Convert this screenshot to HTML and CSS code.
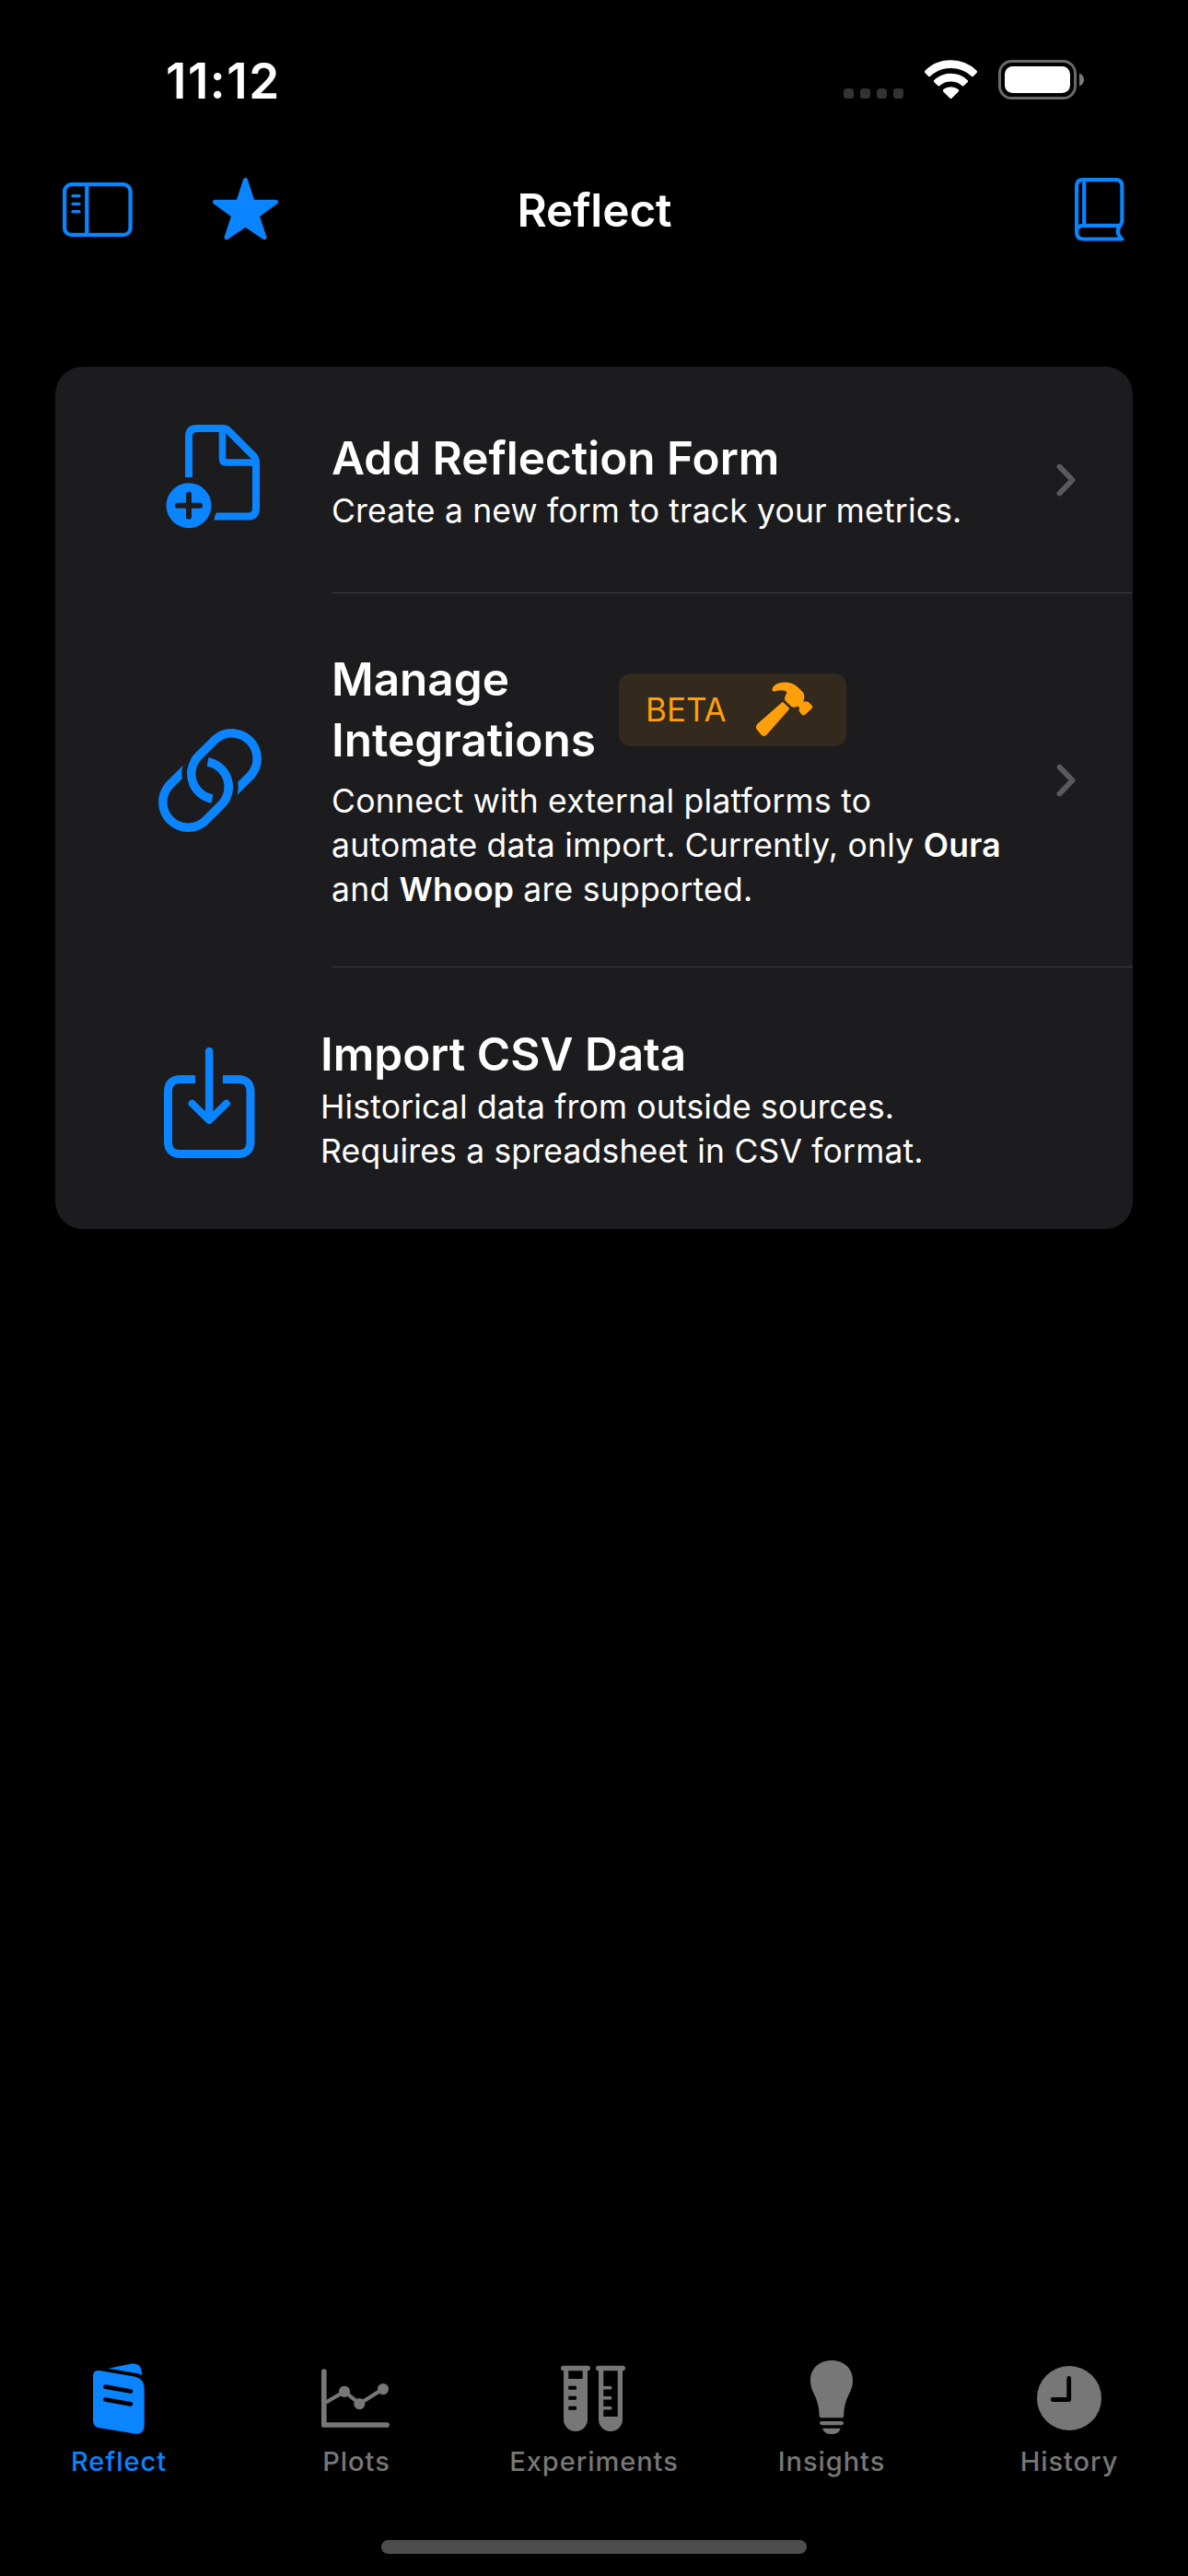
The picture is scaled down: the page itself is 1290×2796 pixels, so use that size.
FILE: index.html
```html
<!DOCTYPE html>
<html lang="en">
<head>
<meta charset="utf-8">
<title>Reflect</title>
<link rel="stylesheet" href="styles.css">
</head>
<body>
<div class="screen">
  <header class="status">
    <span class="time">11:12</span>
    <svg class="status-icons" viewBox="914 62 266 48" width="266" height="48">
      <g fill="#333"><rect x="916" y="96" width="11" height="11" rx="3.5"/><rect x="934" y="96" width="11" height="11" rx="3.5"/><rect x="952" y="96" width="11" height="11" rx="3.5"/><rect x="970" y="96" width="11" height="11" rx="3.5"/></g>
      <g fill="#fff">
        <path d="M1004.6 76.6Q1016 65.2 1032.5 65.2T1060.4 76.6Q1061.6 78 1060.4 79.2L1057 82.8Q1055.900 83.700 1054.800 82.700Q1045.600 74 1032.500 74T1010.200 82.700Q1009.100 83.700 1008 82.800L1004.600 79.200Q1003.400 78 1004.600 76.600Z"/>
        <path d="M1014.400 87Q1022 79.800 1032.500 79.800T1050.600 87Q1051.700 88.200 1050.600 89.300L1046.600 93.100Q1045.600 94 1044.500 93Q1039.500 88.600 1032.500 88.600T1020.500 93Q1019.400 94 1018.400 93.100L1014.400 89.300Q1013.300 88.200 1014.400 87Z"/>
        <path d="M1024.400 97Q1027.800 94.200 1032.500 94.200T1040.600 97Q1041.900 98.200 1040.700 99.400L1033.600 106.500Q1032.500 107.500 1031.400 106.500L1024.300 99.400Q1023.100 98.200 1024.400 97Z"/>
        <rect x="1091" y="72" width="71" height="29" rx="8.500"/>
      </g>
      <rect x="1085.500" y="66.500" width="82" height="40" rx="13" fill="none" stroke="#6a6a6a" stroke-width="3"/>
      <path d="M1172 79.500Q1177 81.500 1177 86.500T1172 93.500Z" fill="#7a7a7a"/>
    </svg>
  </header>

  <nav class="navbar">
    <div class="nav-left">
      <svg viewBox="68 190 76 74" width="76" height="74" fill="none" stroke="#0a84ff" stroke-width="4.300">
        <rect x="70.100" y="200.200" width="71.500" height="54.700" rx="7.500"/><path d="M94.300 200V255"/>
        <path d="M79 212.700H86M79 221.300H86M79 229.700H86" stroke-width="3.300" stroke-linecap="round"/>
      </svg>
      <svg viewBox="229 190 75 74" width="75" height="74" fill="#0a84ff" stroke="#0a84ff" stroke-width="5" stroke-linejoin="round">
        <path d="M266.500 195.500L274.200 219.200H299.500L279.200 234.100L287 257.700L266.500 243.600L246 257.700L253.800 234.100L233.500 219.200H258.800Z"/>
      </svg>
    </div>
    <h1>Reflect</h1>
    <svg class="nav-right" viewBox="1165 191 58 73" width="58" height="73" fill="none" stroke="#0a84ff" stroke-width="4.200" stroke-linejoin="round">
      <path d="M1169.100 252V202Q1169.100 195.100 1176 195.100H1211.500Q1218.400 195.100 1218.400 202V240L1217.300 243.300Q1210 251.500 1218.300 259.500H1176.500Q1169.100 259.500 1169.100 252Q1169.100 244.800 1176.500 244.800H1216"/>
      <path d="M1177.200 196V244.500"/>
    </svg>
  </nav>

  <main class="card">
    <section class="row row-form">
      <svg class="row-icon" viewBox="170 456 118 122" width="118" height="122" fill="none" stroke="#0a84ff" stroke-width="8">
        <path d="M205 518V474Q205 465 214 465H241Q245.500 465 248.500 468L275 494.500Q278 497.500 278 502V551.500Q278 560.600 269 560.600H232.500"/>
        <path d="M241.500 467V498Q241.500 502 245.500 502H277" stroke-width="7.500"/>
        <path d="M226 566L231.500 566L235.500 554L226 554Z" fill="#1c1c1e" stroke="none"/>
        <circle cx="205" cy="548.700" r="24.500" fill="#0a84ff" stroke="none"/>
        <path d="M193 548.700H217M205 536.700V560.700" stroke="#1c1c1e" stroke-width="6" stroke-linecap="round"/>
      </svg>
      <div class="copy">
        <h2>Add Reflection Form</h2>
        <p>Create a new form to track your metrics.</p>
      </div>
      <svg class="chevron" viewBox="0 0 24 38" width="24" height="38"><path d="M4.500 4.500L18.500 19L4.500 33.500"/></svg>
    </section>

    <section class="row row-manage">
      <svg class="row-icon" viewBox="170 788 118 118" width="118" height="118" fill="none" stroke="#0a84ff" stroke-width="9.500">
        <g id="half"><path d="M254.400 859.400L272.400 841.400A27.500 27.500 0 0 0 233.600 802.600L215.600 820.600A27.500 27.500 0 0 0 230.500 867"/><path d="M253.700 842.100A34.750 34.750 0 0 1 251.100 871.400" stroke="#1c1c1e" stroke-width="5.500"/></g>
        <use href="#half" transform="rotate(180 228 847)"/>
      </svg>
      <div class="copy">
        <div class="heading">
          <h2>Manage<br>Integrations</h2>
          <span class="badge"><span>BETA</span>
            <svg viewBox="820 740 66 62" width="66" height="62" fill="#ff9f0a">
              <path d="M849.400 764Q850.600 762.200 852 763.800L857.300 768.800Q858.600 770.200 857.400 771.600L834 798Q830.500 801.500 827.500 798.500L823 793Q820.600 790 823.400 786.800Z"/>
              <path d="M839.500 749Q842 741.600 854 741.600Q862 742 867.500 747L873 752.500Q875 755 874 760L873.500 763Q876.500 761.500 879 763.200L882.500 766.500Q884 768.300 882.500 770L875.500 776.500Q873.500 778.200 871.700 776.500L869.500 774Q868 772.500 869 770Q869.300 767.500 867 767.700Q863 769.500 860.500 768L854 762Q852.300 760 853.500 757L855.500 752.500Q853.500 749.500 846 750.500L841.500 751.500Q839 751.300 839.500 749Z"/>
            </svg>
          </span>
        </div>
        <p>Connect with external platforms to<br>automate data import. Currently, only <b>Oura</b><br>and <b>Whoop</b> are supported.</p>
      </div>
      <svg class="chevron" viewBox="0 0 24 38" width="24" height="38"><path d="M4.500 4.500L18.500 19L4.500 33.500"/></svg>
    </section>

    <section class="row row-import">
      <svg class="row-icon" viewBox="170 1134 118 126" width="118" height="126" fill="none" stroke="#0a84ff" stroke-width="9">
        <path d="M212 1171.500H196Q182.500 1171.500 182.500 1185V1239Q182.500 1252.500 196 1252.500H258.500Q272 1252.500 272 1239V1185Q272 1171.500 258.500 1171.500H242"/>
        <path d="M227.200 1141V1215" stroke-width="8.500" stroke-linecap="round"/><path d="M208.500 1197.700L227.200 1216L245.900 1197.700" stroke-width="8" stroke-linecap="round" stroke-linejoin="round"/>
      </svg>
      <div class="copy">
        <h2>Import CSV Data</h2>
        <p>Historical data from outside sources.<br>Requires a spreadsheet in CSV format.</p>
      </div>
    </section>
  </main>

  <footer class="tabs">
    <a class="tab active">
      <svg viewBox="89 2560 80 84" width="80" height="84" fill="#0a84ff">
        <path d="M108 2573L146 2579.500Q156.700 2582 156.700 2592V2632Q156.700 2643.300 146 2641.600L106.500 2635Q101 2633.500 101 2627V2579Q101 2572 108 2573Z"/>
        <path d="M117.500 2570.800L143 2565.600Q154 2564.500 154 2576.800V2578L150 2576.300Z"/>
        <path d="M114.500 2590.700L141.800 2595.500M114.500 2604.500L141.800 2609.300" stroke="#000" stroke-width="4.800" stroke-linecap="round"/>
      </svg><span>Reflect</span></a>
    <a class="tab">
      <svg viewBox="347 2560 80 84" width="80" height="84" fill="#777" stroke="#777">
        <path d="M351.800 2574V2632H420" fill="none" stroke-width="5.700" stroke-linecap="round" stroke-linejoin="round"/>
        <path d="M354 2607.500L374 2595.700L390.300 2609L416 2593" fill="none" stroke-width="4.200"/>
        <g stroke="none"><circle cx="374" cy="2595.900" r="6.100"/><circle cx="390.300" cy="2609.100" r="6.100"/><circle cx="416" cy="2593.100" r="6.100"/></g>
      </svg><span>Plots</span></a>
    <a class="tab">
      <svg viewBox="607 2560 76 84" width="76" height="84" fill="#777">
        <g><rect x="609" y="2567.700" width="32" height="5.600" rx="2.800"/><path d="M612 2571H638V2626A13 13 0 0 1 612 2626Z"/></g>
        <g><rect x="647" y="2567.700" width="32" height="5.600" rx="2.800"/><path d="M650 2571H676V2626A13 13 0 0 1 650 2626Z"/></g>
        <path d="M617.300 2573.300H632.700V2582H617.300ZM655.300 2573.300H670.700V2623H655.300Z" fill="#000"/>
        <path d="M617.300 2589.700H625.500Q626.700 2591.700 625.500 2593.700H617.300ZM617.300 2600.700H625.500Q626.700 2602.700 625.500 2604.700H617.300ZM617.300 2611.700H625.500Q626.700 2613.700 625.500 2615.700H617.300Z" fill="#000"/>
        <path d="M655 2589.900H663.500Q665.500 2591.700 663.500 2593.500H655ZM655 2600.900H663.500Q665.500 2602.700 663.500 2604.500H655ZM655 2611.900H663.500Q665.500 2613.700 663.500 2615.500H655Z"/>
      </svg><span>Experiments</span></a>
    <a class="tab">
      <svg viewBox="863 2560 80 84" width="80" height="84" fill="#777">
        <path d="M903 2562C889.500 2562 880 2571 880 2583.500C880 2598 889.300 2600 889.700 2622.500Q889.900 2624.300 891.500 2624.300H914.500Q916 2624.300 916.200 2622.500C916.700 2600 926 2598 926 2583.500C926 2571 916.500 2562 903 2562Z"/>
        <rect x="890" y="2628" width="26" height="4.200" rx="2.100"/><path d="M893 2635.700H912.700Q911 2642 903 2642T893 2635.700Z"/>
      </svg><span>Insights</span></a>
    <a class="tab">
      <svg viewBox="1121 2560 80 84" width="80" height="84" fill="#777">
        <circle cx="1161" cy="2603" r="35"/><path d="M1160.700 2581.500V2604.500H1143.200" fill="none" stroke="#000" stroke-width="4.800" stroke-linecap="round" stroke-linejoin="round"/>
      </svg><span>History</span></a>
  </footer>
  <div class="home"></div>
</div>
</body>
</html>
```

FILE: styles.css
```css
* { box-sizing: border-box; }
body { margin: 0; background: #000; color: #fff; font-family: Inter, "Liberation Sans", sans-serif; }
h1, h2, p { margin: 0; }
svg { display: block; flex: none; }
.screen { width: 1290px; height: 2796px; display: flex; flex-direction: column; background: #000; overflow: hidden; }

.status { height: 172px; padding: 58px 110px 0 180px; display: flex; justify-content: space-between; align-items: flex-start; }
.time { font-size: 53px; line-height: 60px; font-weight: 600; letter-spacing: 1.5px; }
.status-icons { margin-top: 4px; }

.navbar { height: 226px; padding: 18px 67px 0 68px; display: grid; grid-template-columns: 1fr auto 1fr; align-items: start; }
.nav-left { display: flex; gap: 85px; }
.nav-right { justify-self: end; margin-top: 1px; }
h1 { font-size: 49.5px; line-height: 60px; font-weight: 600; margin-top: 8px; letter-spacing: -0.1px; }

.card { height: 936px; margin: 0 60px; border-radius: 30px; background: #1c1c1e; overflow: hidden; }
.row { display: grid; grid-template-columns: 118px 1fr 24px; padding: 0 60px 0 110px; background: linear-gradient(#3d3d40, #3d3d40) 300px 100% / 100% 1px no-repeat; }
.row-form { height: 246px; padding-top: 69px; }
.row-manage { height: 406px; padding-top: 60px; }
.row-import { height: 284px; padding-top: 64px; background: none; }
.copy { padding-left: 72px; white-space: nowrap; }
.row-import .copy { padding-left: 60px; }
.row-form .row-icon { margin-top: -11px; }
.row-manage .row-icon { margin-top: 84px; }
.row-import .row-icon { margin-top: 20px; }
.row-form .chevron { margin-top: 35px; }
.row-manage .chevron { margin-top: 124px; }
.chevron path { fill: none; stroke: #5a5a5c; stroke-width: 5.8px; stroke-linecap: round; stroke-linejoin: round; }
h2 { font-size: 49.5px; line-height: 60px; font-weight: 600; }
p { font-size: 35.5px; line-height: 48px; margin-top: 4px; letter-spacing: 0.18px; }
b { font-weight: 600; }
.heading { display: flex; align-items: center; gap: 26px; height: 132px; }
.heading h2 { width: 286px; line-height: 66px; }
.heading + p { margin-top: 10px; letter-spacing: 0.24px; }
.badge { width: 247px; height: 79px; padding: 0 34px 0 29px; border-radius: 13px; background: #33291d; color: #ff9f0a; display: flex; align-items: center; justify-content: space-between; font-size: 35px; }

.tabs { margin-top: auto; height: 189px; display: grid; grid-template-columns: repeat(5, 1fr); }
.tab { display: flex; flex-direction: column; align-items: center; color: #777; font-size: 29px; font-weight: 500; line-height: 36px; }
.tab span { margin-top: 10px; letter-spacing: 0.95px; }
.tab.active { color: #0a84ff; }
.home { width: 462px; height: 15px; margin: 8px auto 24px; border-radius: 8px; background: #4d4d4d; flex: none; }
```
